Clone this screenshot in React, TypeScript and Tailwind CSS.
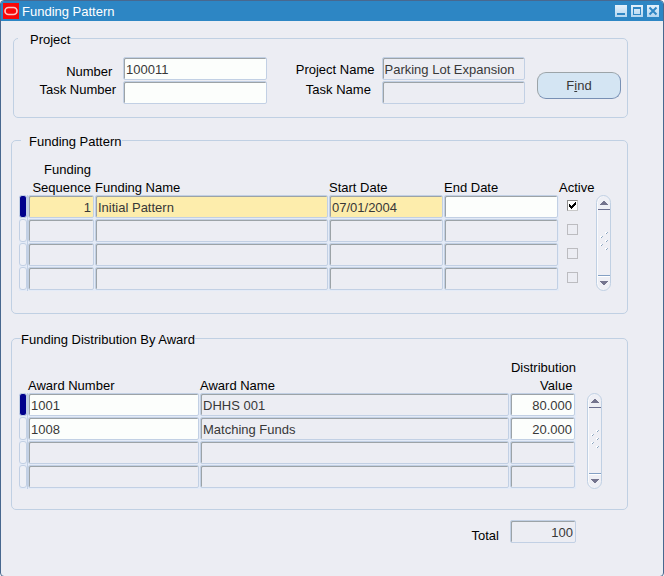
import type { ReactNode } from 'react';

interface FieldProps {
  id?: string;
  label?: string;
  value?: string;
  tone?: 'edit' | 'locked' | 'current';
  right?: boolean;
}

const TONES = {
  edit:    'bg-[#fcfefc]',
  locked:  'bg-[#ecedf3]',
  current: 'bg-[#fdedac]',
};

const PATTERNS = [
  { seq: '1', name: 'Initial Pattern', start: '07/01/2004', active: true },
  { seq: '', name: '', start: '', active: false },
  { seq: '', name: '', start: '', active: false },
  { seq: '', name: '', start: '', active: false },
];

const AWARDS = [
  { number: '1001', name: 'DHHS 001', share: '80.000' },
  { number: '1008', name: 'Matching Funds', share: '20.000' },
  { number: '', name: '', share: '' },
  { number: '', name: '', share: '' },
];

function Field({ id, label, value = '', tone = 'locked', right }: FieldProps) {
  return (
    <input
      id={id}
      type="text"
      aria-label={label}
      defaultValue={value}
      readOnly={tone === 'locked'}
      className={`block h-[23px] w-full min-w-0 rounded-[2px] border border-[#c2d0e4] px-0.5 pt-px text-[13px] text-[#383838] shadow-[inset_1px_1px_0_#9ca3a7] outline-none ${TONES[tone]} ${right ? 'text-right' : ''}`}
    />
  );
}

function Group({ title, legend, className, children }: { title: string; legend: string; className: string; children: ReactNode }) {
  return (
    <fieldset className={`rounded-[5px] border border-[#c0d0e3] ${className}`}>
      <legend className={`pt-1 leading-4 ${legend}`}>{title}</legend>
      {children}
    </fieldset>
  );
}

// column titles hang right on top of the first row
function Head({ className = '', children }: { className?: string; children: ReactNode }) {
  return (
    <th className={`font-normal ${className}`}>
      <div className="-mb-0.5">{children}</div>
    </th>
  );
}

function Cell({ children }: { children: ReactNode }) {
  return <td className="bg-[#e4ebf7] pr-px pb-px">{children}</td>;
}

function Marker({ current }: { current: boolean }) {
  return (
    <td className="border-r border-[#c2d0e4] bg-[#e4ebf7] pb-px">
      <div className={`h-[23px] rounded-[3px] border border-[#c2d0e4] ${current ? 'bg-[#00008c]' : 'bg-[#eef0f6]'}`} />
    </td>
  );
}

const GRIP = [[9, 1], [4, 5], [9, 9], [4, 13], [9, 17]];

function ScrollBar({ name }: { name: string }) {
  return (
    <div className="flex h-24 w-[15px] shrink-0 flex-col items-center justify-between self-end rounded-full border border-[#c0d0e3] bg-[#eeeff5] shadow-[inset_1px_0_0_#fafbfd]">
      <button type="button" aria-label={`Scroll ${name} up`} className="flex h-3.5 w-3 items-center justify-center border-b border-[#6c7090]">
        <svg width="8" height="4" viewBox="0 0 8 4" fill="#74748e" shapeRendering="crispEdges"><path d="M3 0h2v1h1v1h1v1h1v1H0V3h1V2h1V1h1z"/></svg>
      </button>
      <svg width="13" height="21" viewBox="0 0 13 21" shapeRendering="crispEdges">
        {GRIP.map(([x, y]) => (
          <g key={`${x}-${y}`}>
            <rect x={x - 1} y={y - 1} width="2" height="2" fill="#fff"/>
            <rect x={x + 1} y={y - 1} width="1" height="1" fill="#9db4cc"/>
            <rect x={x} y={y} width="1" height="1" fill="#86a0bc"/>
          </g>
        ))}
      </svg>
      <button type="button" aria-label={`Scroll ${name} down`} className="flex h-[15px] w-3 items-center justify-center border-t border-[#84a0c4] shadow-[inset_0_1px_0_#fff]">
        <svg width="8" height="4" viewBox="0 0 8 4" fill="#74748e" shapeRendering="crispEdges"><path d="M0 0h8v1H7v1H6v1H5v1H3V3H2V2H1V1H0z"/></svg>
      </button>
    </div>
  );
}

function WindowButton({ name, children }: { name: string; children: ReactNode }) {
  return (
    <button type="button" aria-label={name} className="h-3 w-3 bg-linear-to-b from-[#e4f1fb] to-[#b4d6f0]">
      <svg width="12" height="12" viewBox="0 0 12 12" fill="none" stroke="#2f86c4" shapeRendering="crispEdges">{children}</svg>
    </button>
  );
}

function TitleBar() {
  return (
    <header className="flex h-5 items-center bg-[#2d86c4] pr-1 pl-0.5 text-white">
      <svg width="16" height="16" viewBox="0 0 16 16" className="mr-[3px]">
        <rect width="16" height="16" fill="#f80808"/>
        <rect x="2" y="4.5" width="12" height="7" rx="3.5" fill="none" stroke="#fbc4c4" strokeWidth="1.7"/>
      </svg>
      <h1 className="pt-px leading-5">Funding Pattern</h1>
      <div className="ml-auto flex gap-1">
        <WindowButton name="Minimize"><path d="M2 9h8" strokeWidth="2"/></WindowButton>
        <WindowButton name="Maximize"><path d="M2.5 2v8M9.5 2v8M2 9.5h8"/><path d="M2 3h8" strokeWidth="2"/></WindowButton>
        <WindowButton name="Close"><path d="M2.5 2.5l7 7M9.5 2.5l-7 7" strokeWidth="2" shapeRendering="auto"/></WindowButton>
      </div>
    </header>
  );
}

function ProjectGroup() {
  return (
    <Group title="Project" legend="ml-1 pl-3" className="ml-0.5 pb-[13px]">
      <div className="flex pt-[9px] pr-1.5">
        <div className="flex w-[102px] shrink-0 flex-col pt-1.5 text-right leading-[18px]">
          <label htmlFor="number">Number&nbsp;</label>
          <label htmlFor="task-number">Task Number</label>
        </div>
        <div className="ml-[7px] flex flex-1 flex-col gap-px">
          <Field id="number" value="100011" tone="edit"/>
          <Field id="task-number" tone="edit"/>
        </div>
        <div className="flex w-[108px] shrink-0 flex-col pt-[3px] text-right leading-5">
          <label htmlFor="project-name">Project Name</label>
          <label htmlFor="task-name">Task Name&nbsp;</label>
        </div>
        <div className="ml-[7px] flex flex-1 flex-col gap-px">
          <Field id="project-name" value="Parking Lot Expansion"/>
          <Field id="task-name"/>
        </div>
        <button type="button" className="mb-[5px] ml-3 h-[27px] w-[84px] shrink-0 self-end rounded-[9px] border border-t-[#9ca4a8] border-r-[#7890b4] border-b-[#7890b4] border-l-[#9ca4a8] bg-[#d4e5f3] text-[#383838]">
          F<span className="underline">i</span>nd
        </button>
      </div>
    </Group>
  );
}

function PatternGroup() {
  return (
    <Group title="Funding Pattern" legend="ml-[9px] pl-2" className="mt-3 pb-[22px]">
      <div className="flex pt-[11px] pr-4 pl-[7px]">
        <table className="flex-1 table-fixed border-separate border-spacing-0">
          <colgroup>
            <col className="w-[9px]"/>
            <col className="w-[67px]"/>
            <col/>
            <col className="w-[115px]"/>
            <col className="w-[115px]"/>
            <col className="w-[37px]"/>
          </colgroup>
          <thead>
            <tr className="text-left align-bottom leading-[18px]">
              <td/>
              <Head className="pr-1 text-right">Funding Sequence</Head>
              <Head>Funding Name</Head>
              <Head>Start Date</Head>
              <Head>End Date</Head>
              <Head>Active</Head>
            </tr>
          </thead>
          <tbody>
            {PATTERNS.map((p, i) => (
              <tr key={i}>
                <Marker current={i === 0}/>
                <Cell><Field label="Funding Sequence" value={p.seq} tone={i === 0 ? 'current' : 'locked'} right/></Cell>
                <Cell><Field label="Funding Name" value={p.name} tone={i === 0 ? 'current' : 'locked'}/></Cell>
                <Cell><Field label="Start Date" value={p.start} tone={i === 0 ? 'current' : 'locked'}/></Cell>
                <Cell><Field label="End Date" tone={i === 0 ? 'edit' : 'locked'}/></Cell>
                <td className="pb-[3px] pl-2">
                  <div className="grid h-[11px] w-[11px]">
                    <input
                      type="checkbox"
                      aria-label="Active"
                      defaultChecked={p.active}
                      disabled={i > 0}
                      className={`peer col-start-1 row-start-1 h-[11px] w-[11px] appearance-none border ${i === 0 ? 'border-t-[#8c8c8c] border-r-[#c8c8c8] border-b-[#c8c8c8] border-l-[#8c8c8c] bg-white' : 'border-[#bcbcc0]'}`}
                    />
                    <svg width="11" height="11" viewBox="0 0 11 11" className="pointer-events-none invisible col-start-1 row-start-1 peer-checked:visible" shapeRendering="crispEdges">
                      <path d="M2 4h1v1h1v1h1V5h1V4h1V3h1V2h1v3H8v1H7v1H6v1H5v1H4V8H3V7H2z" fill="#000"/>
                    </svg>
                  </div>
                </td>
              </tr>
            ))}
          </tbody>
        </table>
        <ScrollBar name="patterns"/>
      </div>
    </Group>
  );
}

function AwardGroup() {
  return (
    <Group title="Funding Distribution By Award" legend="ml-[9px]" className="mt-3.5 pb-5">
      <div className="flex gap-[11px] pt-[11px] pr-[25px] pl-[7px]">
        <table className="flex-1 table-fixed border-separate border-spacing-0">
          <colgroup>
            <col className="w-[9px]"/>
            <col className="w-[172px]"/>
            <col/>
            <col className="w-[66px]"/>
          </colgroup>
          <thead>
            <tr className="text-left align-bottom leading-[18px]">
              <td/>
              <Head>Award Number</Head>
              <Head>Award Name</Head>
              <Head className="text-right">Distribution<br/>Value&nbsp;</Head>
            </tr>
          </thead>
          <tbody>
            {AWARDS.map((a, i) => (
              <tr key={i}>
                <Marker current={i === 0}/>
                <Cell><Field label="Award Number" value={a.number} tone={a.number ? 'edit' : 'locked'}/></Cell>
                <Cell><Field label="Award Name" value={a.name}/></Cell>
                <Cell><Field label="Distribution Value" value={a.share} tone={a.number ? 'edit' : 'locked'} right/></Cell>
              </tr>
            ))}
          </tbody>
        </table>
        <ScrollBar name="awards"/>
      </div>
    </Group>
  );
}

export default function App() {
  return (
    <div className="bg-white font-['Liberation_Sans',Arial,sans-serif] text-[13px] text-black">
      <div className="flex min-h-screen flex-col overflow-hidden rounded-[4px] border border-[#48688f] bg-[#ecedf3]">
        <TitleBar/>
        <main className="pt-[7px] pr-[35px] pb-8 pl-2.5">
          <ProjectGroup/>
          <PatternGroup/>
          <AwardGroup/>
          <div className="mt-2.5 flex justify-end gap-[11px] pr-[52px]">
            <label htmlFor="total" className="pt-2 leading-4">Total</label>
            <div className="w-[66px]">
              <Field id="total" value="100" right/>
            </div>
          </div>
        </main>
      </div>
    </div>
  );
}
